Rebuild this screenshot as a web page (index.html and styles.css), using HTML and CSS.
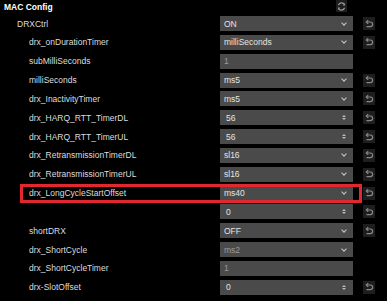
FILE: index.html
```html
<!DOCTYPE html>
<html lang="en">
<head>
    <meta charset="UTF-8">
    <title>MAC Config</title>
    <link rel="stylesheet" href="styles.css">
</head>
<body>
    <div class="panel">
        <div class="panel-head">
            <span class="panel-title">MAC Config</span>
            <button class="icon-btn refresh" title="Refresh">
                <svg viewBox="0 0 12 12" width="11" height="11"><path d="M9.3 4.2A3.6 3.6 0 0 0 2.6 4.6M2.7 7.8A3.6 3.6 0 0 0 9.4 7.4" fill="none" stroke="#999" stroke-width="1.3"/><path d="M9.9 2.2v2.6H7.3zM2.1 9.8V7.2h2.6z" fill="#999"/></svg>
            </button>
        </div>

        <div class="rows">
            <div class="row">
                <span class="label top">DRXCtrl</span>
                <div class="field select"><span>ON</span><i class="chev"></i></div>
                <button class="icon-btn undo"><svg viewBox="0 0 12 12"><path d="M3.5 4h3.8a2.3 2.3 0 0 1 0 4.6H3.5" fill="none" stroke="#888" stroke-width="1.2"/><path d="M5.2 2.2 3.3 4l1.9 1.8" fill="none" stroke="#888" stroke-width="1.2"/></svg></button>
            </div>
            <div class="row">
                <span class="label">drx_onDurationTimer</span>
                <div class="field select"><span>milliSeconds</span><i class="chev"></i></div>
                <button class="icon-btn undo"><svg viewBox="0 0 12 12"><path d="M3.5 4h3.8a2.3 2.3 0 0 1 0 4.6H3.5" fill="none" stroke="#888" stroke-width="1.2"/><path d="M5.2 2.2 3.3 4l1.9 1.8" fill="none" stroke="#888" stroke-width="1.2"/></svg></button>
            </div>
            <div class="row">
                <span class="label">subMilliSeconds</span>
                <div class="field text disabled"><span>1</span></div>
            </div>
            <div class="row">
                <span class="label">milliSeconds</span>
                <div class="field select"><span>ms5</span><i class="chev"></i></div>
                <button class="icon-btn undo"><svg viewBox="0 0 12 12"><path d="M3.5 4h3.8a2.3 2.3 0 0 1 0 4.6H3.5" fill="none" stroke="#888" stroke-width="1.2"/><path d="M5.2 2.2 3.3 4l1.9 1.8" fill="none" stroke="#888" stroke-width="1.2"/></svg></button>
            </div>
            <div class="row">
                <span class="label">drx_InactivityTimer</span>
                <div class="field select"><span>ms5</span><i class="chev"></i></div>
                <button class="icon-btn undo"><svg viewBox="0 0 12 12"><path d="M3.5 4h3.8a2.3 2.3 0 0 1 0 4.6H3.5" fill="none" stroke="#888" stroke-width="1.2"/><path d="M5.2 2.2 3.3 4l1.9 1.8" fill="none" stroke="#888" stroke-width="1.2"/></svg></button>
            </div>
            <div class="row">
                <span class="label">drx_HARQ_RTT_TimerDL</span>
                <div class="field number"><span>56</span><i class="spin"></i></div>
                <button class="icon-btn undo"><svg viewBox="0 0 12 12"><path d="M3.5 4h3.8a2.3 2.3 0 0 1 0 4.6H3.5" fill="none" stroke="#888" stroke-width="1.2"/><path d="M5.2 2.2 3.3 4l1.9 1.8" fill="none" stroke="#888" stroke-width="1.2"/></svg></button>
            </div>
            <div class="row">
                <span class="label">drx_HARQ_RTT_TimerUL</span>
                <div class="field number"><span>56</span><i class="spin"></i></div>
                <button class="icon-btn undo"><svg viewBox="0 0 12 12"><path d="M3.5 4h3.8a2.3 2.3 0 0 1 0 4.6H3.5" fill="none" stroke="#888" stroke-width="1.2"/><path d="M5.2 2.2 3.3 4l1.9 1.8" fill="none" stroke="#888" stroke-width="1.2"/></svg></button>
            </div>
            <div class="row">
                <span class="label">drx_RetransmissionTimerDL</span>
                <div class="field select"><span>sl16</span><i class="chev"></i></div>
                <button class="icon-btn undo"><svg viewBox="0 0 12 12"><path d="M3.5 4h3.8a2.3 2.3 0 0 1 0 4.6H3.5" fill="none" stroke="#888" stroke-width="1.2"/><path d="M5.2 2.2 3.3 4l1.9 1.8" fill="none" stroke="#888" stroke-width="1.2"/></svg></button>
            </div>
            <div class="row">
                <span class="label">drx_RetransmissionTimerUL</span>
                <div class="field select"><span>sl16</span><i class="chev"></i></div>
                <button class="icon-btn undo"><svg viewBox="0 0 12 12"><path d="M3.5 4h3.8a2.3 2.3 0 0 1 0 4.6H3.5" fill="none" stroke="#888" stroke-width="1.2"/><path d="M5.2 2.2 3.3 4l1.9 1.8" fill="none" stroke="#888" stroke-width="1.2"/></svg></button>
            </div>
            <!-- highlighted row -->
            <div class="row marked">
                <span class="label">drx_LongCycleStartOffset</span>
                <div class="field select"><span>ms40</span><i class="chev"></i></div>
                <button class="icon-btn undo"><svg viewBox="0 0 12 12"><path d="M3.5 4h3.8a2.3 2.3 0 0 1 0 4.6H3.5" fill="none" stroke="#888" stroke-width="1.2"/><path d="M5.2 2.2 3.3 4l1.9 1.8" fill="none" stroke="#888" stroke-width="1.2"/></svg></button>
            </div>
            <div class="row">
                <span class="label"></span>
                <div class="field number"><span>0</span><i class="spin"></i></div>
                <button class="icon-btn undo"><svg viewBox="0 0 12 12"><path d="M3.5 4h3.8a2.3 2.3 0 0 1 0 4.6H3.5" fill="none" stroke="#888" stroke-width="1.2"/><path d="M5.2 2.2 3.3 4l1.9 1.8" fill="none" stroke="#888" stroke-width="1.2"/></svg></button>
            </div>
            <div class="row">
                <span class="label">shortDRX</span>
                <div class="field select"><span>OFF</span><i class="chev"></i></div>
                <button class="icon-btn undo"><svg viewBox="0 0 12 12"><path d="M3.5 4h3.8a2.3 2.3 0 0 1 0 4.6H3.5" fill="none" stroke="#888" stroke-width="1.2"/><path d="M5.2 2.2 3.3 4l1.9 1.8" fill="none" stroke="#888" stroke-width="1.2"/></svg></button>
            </div>
            <div class="row">
                <span class="label">drx_ShortCycle</span>
                <div class="field select disabled"><span>ms2</span><i class="chev"></i></div>
            </div>
            <div class="row">
                <span class="label">drx_ShortCycleTimer</span>
                <div class="field text disabled"><span>1</span></div>
            </div>
            <div class="row">
                <span class="label">drx-SlotOffset</span>
                <div class="field number"><span>0</span><i class="spin"></i></div>
                <button class="icon-btn undo"><svg viewBox="0 0 12 12"><path d="M3.5 4h3.8a2.3 2.3 0 0 1 0 4.6H3.5" fill="none" stroke="#888" stroke-width="1.2"/><path d="M5.2 2.2 3.3 4l1.9 1.8" fill="none" stroke="#888" stroke-width="1.2"/></svg></button>
            </div>
        </div>
    </div>
</body>
</html>
```

FILE: styles.css
```css
body {
    margin: 0;
    background-color: #000;
    color: #ddd;
    font-family: "Liberation Sans", Arial, sans-serif;
    font-size: 8.5px;
}
.panel {
    width: 387px;
}
.panel-head {
    display: flex;
    align-items: center;
    justify-content: space-between;
    height: 13px;
    padding: 0 40px 0 4px;
}
.panel-title {
    font-weight: bold;
    color: #fff;
}
.icon-btn {
    display: flex;
    align-items: center;
    justify-content: center;
    padding: 0;
    border: none;
    background-color: #1e1e1e;
}
.refresh {
    width: 11px;
    height: 12px;
    margin-top: -1px;
}
.rows {
    display: flex;
    flex-direction: column;
    gap: 3.85px;
    margin-top: 3px;
}
.row {
    position: relative;
    display: grid;
    grid-template-columns: 210px 133px 12px;
    column-gap: 10px;
    align-items: center;
    height: 15px;
}
.label {
    padding-left: 29px;
    white-space: nowrap;
}
.label.top {
    padding-left: 17px;
}
.marked::after {
    content: "";
    position: absolute;
    left: 20px;
    top: -2px;
    width: 336px;
    height: 13px;
    border: 3px solid #e0282e;
}
.field {
    display: flex;
    align-items: center;
    justify-content: space-between;
    height: 15px;
    padding: 0 5px 0 4px;
    background-color: #4a4a4a;
    color: #e4e4e4;
}
.field.number {
    padding-left: 6px;
}
.field.disabled {
    color: #9a9a9a;
}
.chev {
    width: 3px;
    height: 3px;
    margin: -2px 2px 0 0;
    border-right: 1.2px solid #c8c8c8;
    border-bottom: 1.2px solid #c8c8c8;
    transform: rotate(45deg);
}
.spin {
    display: flex;
    flex-direction: column;
    gap: 1px;
    margin-right: 2px;
}
.spin::before,
.spin::after {
    content: "";
    border-left: 2px solid transparent;
    border-right: 2px solid transparent;
}
.spin::before {
    border-bottom: 2.5px solid #bbb;
}
.spin::after {
    border-top: 2.5px solid #bbb;
}
.undo {
    width: 12px;
    height: 13px;
}
.undo svg {
    width: 12px;
    height: 12px;
}
```
